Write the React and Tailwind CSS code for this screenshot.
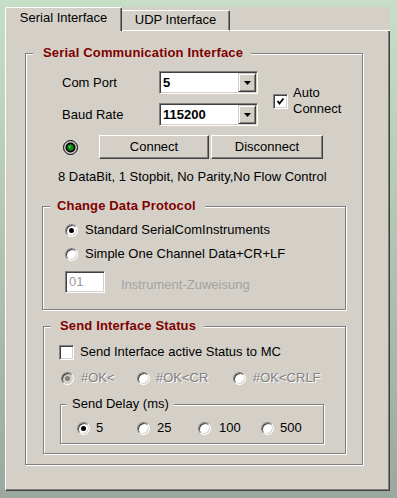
import React from "react";

const Radio = ({ checked, disabled }) => (
  <div
    className={`relative w-[13px] h-[13px] rounded-full border border-t-[#808080] border-l-[#808080] border-r-white border-b-white shadow-[inset_1px_1px_0_#404040,inset_-1px_-1px_0_#d4d0c8] flex items-center justify-center ${
      disabled && checked ? "bg-[#d4d0c8]" : "bg-white"
    }`}
  >
    {checked && (
      <div
        className={`w-[5px] h-[5px] rounded-full ${
          disabled ? "bg-[#808080]" : "bg-black"
        }`}
      ></div>
    )}
  </div>
);

const Checkbox = ({ checked }) => (
  <div className="w-[15px] h-[15px] bg-white border border-t-[#808080] border-l-[#808080] border-r-white border-b-white shadow-[inset_1px_1px_0_#404040,inset_-1px_-1px_0_#d4d0c8] flex items-center justify-center shrink-0">
    {checked && (
      <svg width="11" height="11" viewBox="0 0 11 11">
        <path d="M2.5 5 L4.5 7.5 L8.5 2.5" fill="none" stroke="#000" strokeWidth="1.8" />
      </svg>
    )}
  </div>
);

const Combo = ({ value }) => (
  <div className="w-[99px] h-[23px] bg-white border border-t-[#808080] border-l-[#808080] border-r-white border-b-white shadow-[inset_1px_1px_0_#404040,inset_-1px_-1px_0_#d4d0c8] flex items-center p-[1px]">
    <span className="flex-1 pl-[2px] font-bold">{value}</span>
    <div className="w-[18px] h-full bg-[#d4d0c8] border border-t-[#d4d0c8] border-l-[#d4d0c8] border-r-[#404040] border-b-[#404040] shadow-[inset_1px_1px_0_#fff,inset_-1px_-1px_0_#808080] flex items-center justify-center">
      <svg width="7" height="4" viewBox="0 0 7 4">
        <path d="M0 0 H7 L3.5 4 Z" fill="#000" />
      </svg>
    </div>
  </div>
);

const Led = () => (
  <svg width="15" height="15" viewBox="0 0 15 15">
    <circle cx="7.5" cy="7.5" r="7" fill="#c8c8c8" stroke="#000" strokeWidth="1" />
    <circle cx="7.5" cy="7.5" r="5" fill="#000" />
    <circle cx="7.5" cy="7.5" r="3.2" fill="#0b8a12" />
    <circle cx="6.8" cy="6.8" r="1.2" fill="#3fbf45" />
  </svg>
);

const btn =
  "h-[24px] bg-[#d4d0c8] border border-t-white border-l-white border-r-[#404040] border-b-[#404040] shadow-[inset_-1px_-1px_0_#808080] flex items-center justify-center";

export default function App() {
  return (
    <div className="w-[397px] h-[498px] bg-[linear-gradient(to_bottom,#c6dfc6,#9ba89f)] pl-[5px] pt-[7px] font-['Liberation_Sans',Arial,sans-serif] text-[13px] leading-[16px] text-black">
      <div className="w-[385px] h-[484px] bg-[#d4d0c8] flex flex-col">
        {/* tabs */}
        <div className="flex items-end h-[24px]">
          <div className="w-[117px] h-[24px] border-l border-t border-l-white border-t-white border-r border-r-[#404040] shadow-[inset_-1px_0_0_#808080] rounded-t-[2px] pt-[2px] text-center">
            Serial Interface
          </div>
          <div className="w-[108px] h-[21px] border-t border-t-white border-r border-r-[#404040] border-b border-b-white shadow-[inset_-1px_0_0_#808080] rounded-tr-[2px] pt-[1px] text-center">
            UDP Interface
          </div>
          <div className="flex-1 h-full border-b border-b-white"></div>
        </div>

        {/* page */}
        <div className="flex-1 border-l border-l-white border-r border-r-[#404040] border-b border-b-[#404040] shadow-[inset_-1px_-1px_0_#808080] pt-[22px] pl-[19px]">
          <div className="relative w-[338px] h-[412px] border border-[#808080] shadow-[1px_1px_0_#fff,inset_1px_1px_0_#fff]">
            <div className="absolute -top-[9px] left-[7px] pl-[10px] pr-[8px] bg-[#d4d0c8] font-bold tracking-[0.17px] text-[#800000]">
              Serial Communication Interface
            </div>

            <div className="flex mt-[17px] ml-[36px]">
              <div className="flex flex-col gap-[9px]">
                <div className="flex items-center h-[23px]">
                  <span className="w-[97px]">Com Port</span>
                  <Combo value="5" />
                </div>
                <div className="flex items-center h-[23px]">
                  <span className="w-[97px]">Baud Rate</span>
                  <Combo value="115200" />
                </div>
              </div>
              <div className="flex items-center self-start ml-[15px] mt-[14px]">
                <Checkbox checked />
                <div className="ml-[5px]">
                  Auto
                  <br />
                  Connect
                </div>
              </div>
            </div>

            <div className="flex items-center mt-[9px] ml-[37px] h-[24px]">
              <Led />
              <button className={`${btn} ml-[21px] w-[110px]`}>Connect</button>
              <button className={`${btn} ml-[2px] w-[112px]`}>Disconnect</button>
            </div>

            <div className="mt-[10px] ml-[32px]">
              8 DataBit, 1 Stopbit, No Parity,No Flow Control
            </div>

            {/* Change Data Protocol */}
            <div className="relative mt-[21px] ml-[16px] w-[304px] h-[104px] border border-[#808080] shadow-[1px_1px_0_#fff,inset_1px_1px_0_#fff]">
              <div className="absolute -top-[9px] left-[7px] pl-[7px] pr-[9px] bg-[#d4d0c8] font-bold tracking-[0.15px] text-[#800000]">
                Change Data Protocol
              </div>
              <div className="flex items-center mt-[15px] ml-[22px] h-[16px]">
                <Radio checked />
                <span className="ml-[7px]">Standard SerialComInstruments</span>
              </div>
              <div className="flex items-center mt-[8px] ml-[22px] h-[16px]">
                <Radio />
                <span className="ml-[7px]">Simple One Channel Data+CR+LF</span>
              </div>
              <div className="flex items-end mt-[9px] ml-[22px]">
                <div className="w-[40px] h-[22px] bg-white border border-t-[#808080] border-l-[#808080] border-r-white border-b-white shadow-[inset_1px_1px_0_#404040,inset_-1px_-1px_0_#d4d0c8] flex items-center pl-[3px] text-[#9a9a9a]">
                  01
                </div>
                <span className="ml-[16px] text-[#a3a3a3]">Instrument-Zuweisung</span>
              </div>
            </div>

            {/* Send Interface Status */}
            <div className="relative mt-[16px] ml-[17px] w-[303px] h-[128px] border border-[#808080] shadow-[1px_1px_0_#fff,inset_1px_1px_0_#fff]">
              <div className="absolute -top-[9px] left-[7px] pl-[9px] pr-[8px] bg-[#d4d0c8] font-bold tracking-[0.15px] text-[#800000]">
                Send Interface Status
              </div>
              <div className="flex items-center mt-[17px] ml-[15px] h-[16px]">
                <Checkbox />
                <span className="ml-[6px]">Send Interface active Status to MC</span>
              </div>
              <div className="flex items-center mt-[10px] ml-[17px] h-[16px] text-[#808080] [text-shadow:1px_1px_0_#fff]">
                <div className="flex items-center w-[76px]">
                  <Radio checked disabled />
                  <span className="ml-[7px]">#OK&lt;</span>
                </div>
                <div className="flex items-center w-[96px]">
                  <Radio disabled />
                  <span className="ml-[6px]">#OK&lt;CR</span>
                </div>
                <div className="flex items-center">
                  <Radio disabled />
                  <span className="ml-[7px]">#OK&lt;CRLF</span>
                </div>
              </div>

              <div className="relative mt-[18px] ml-[16px] w-[264px] h-[40px] border border-[#808080] shadow-[1px_1px_0_#fff,inset_1px_1px_0_#fff]">
                <div className="absolute -top-[9px] left-[5px] pl-[6px] pr-[5px] bg-[#d4d0c8]">
                  Send Delay (ms)
                </div>
                <div className="flex items-center mt-[15px] ml-[16px] h-[16px]">
                  <div className="flex items-center w-[60px]">
                    <Radio checked />
                    <span className="ml-[6px]">5</span>
                  </div>
                  <div className="flex items-center w-[61px]">
                    <Radio />
                    <span className="ml-[7px]">25</span>
                  </div>
                  <div className="flex items-center w-[63px]">
                    <Radio />
                    <span className="ml-[8px]">100</span>
                  </div>
                  <div className="flex items-center">
                    <Radio />
                    <span className="ml-[6px]">500</span>
                  </div>
                </div>
              </div>
            </div>
          </div>
        </div>
      </div>
    </div>
  );
}
